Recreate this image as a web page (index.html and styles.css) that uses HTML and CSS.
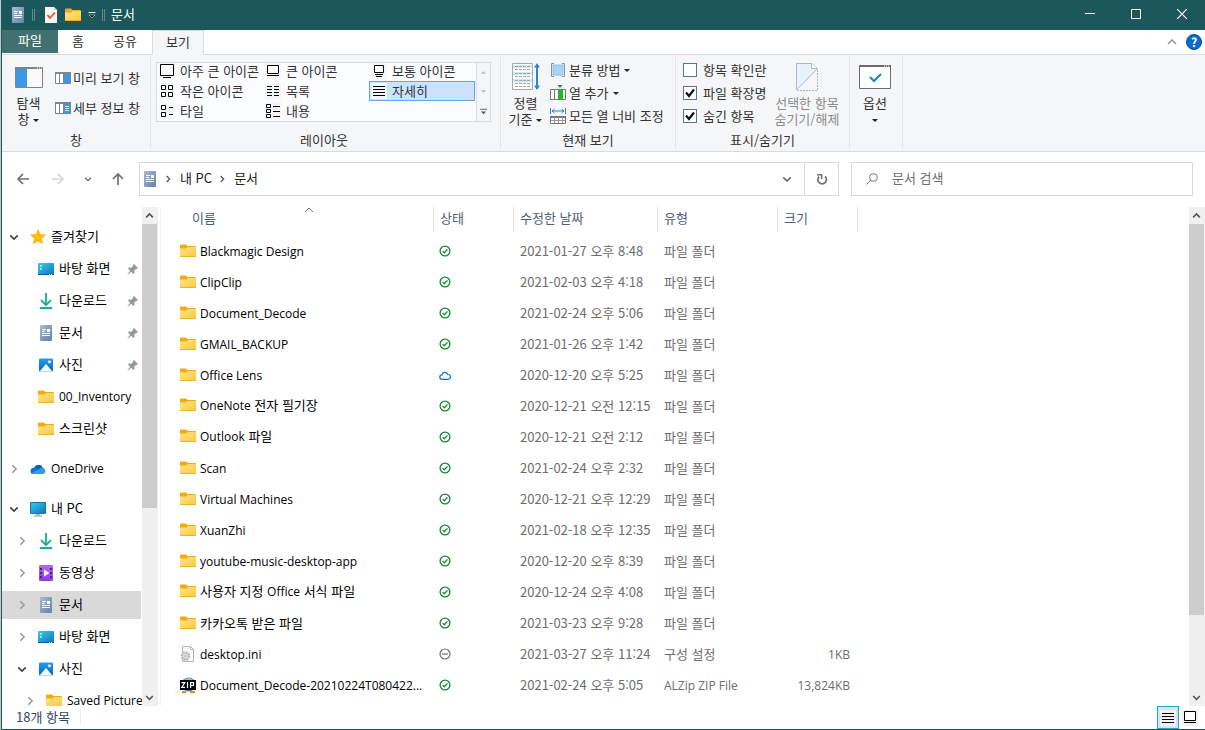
FILE: index.html
```html
<!DOCTYPE html>
<html lang="ko">

<head>
  <meta charset="UTF-8">
  <meta name="viewport" content="width=device-width, initial-scale=1.0">
  <title>문서</title>
  <link rel="stylesheet" href="styles.css">
</head>

<body>
  <!-- icon set -->
  <svg class="sprite" aria-hidden="true">
    <defs>
      <linearGradient id="g-folder" x1="0" y1="0" x2="1" y2="1"><stop offset="0" stop-color="#ffe391"/><stop offset="1" stop-color="#fdc937"/></linearGradient>
      <linearGradient id="g-doc" x1="0" y1="0" x2="1" y2="1"><stop offset="0" stop-color="#a6bcd3"/><stop offset="1" stop-color="#5f82a9"/></linearGradient>
      <linearGradient id="g-desk" x1="0" y1="0" x2="1" y2="1"><stop offset="0" stop-color="#2fd0e6"/><stop offset="1" stop-color="#1272c4"/></linearGradient>
      <linearGradient id="g-down" x1="0" y1="0" x2="0" y2="1"><stop offset="0" stop-color="#35b983"/><stop offset="1" stop-color="#10b09c"/></linearGradient>
      <linearGradient id="g-video" x1="0" y1="0" x2="0" y2="1"><stop offset="0" stop-color="#b36bf0"/><stop offset="1" stop-color="#8a3fe0"/></linearGradient>
      <linearGradient id="g-photo" x1="0" y1="0" x2="0" y2="1"><stop offset="0" stop-color="#1fa0ee"/><stop offset="1" stop-color="#0a62b5"/></linearGradient>
    </defs>
    <symbol id="folder" viewBox="0 0 16 16">
      <path d="M0 2.500q0-1 1-1h5l1.500 1.500H15q1 0 1 1V7H0z" fill="#f2ab09"/>
      <path d="M0 5.500h6.500l1.200-1.500H16v9q0 1-1 1H1q-1 0-1-1z" fill="url(#g-folder)"/>
      <path d="M0 13.500h16" stroke="#eab12c"/>
    </symbol>
    <symbol id="doc" viewBox="0 0 16 16">
      <rect x="2" y="0" width="12" height="16" rx="1" fill="url(#g-doc)"/>
      <path d="M4 4.500h4M4 6.500h3M4 8.500h8M4 10.500h8" stroke="#fff"/>
      <rect x="9" y="4" width="3" height="3" fill="#fff"/>
    </symbol>
    <symbol id="desk" viewBox="0 0 16 16">
      <rect x="0" y="2" width="16" height="12" rx="1" fill="url(#g-desk)"/>
      <path d="M2 4h1.500v1.500H2zM2 7h1.500v1.500H2z" fill="#fff"/>
      <path d="M0 13.500h16" stroke="#0d5e9e"/><path d="M11 13.500h1m1 0h1" stroke="#d6ecfa"/>
    </symbol>
    <symbol id="down" viewBox="0 0 16 16">
      <path d="M3 7l5 5 5-5" fill="none" stroke="url(#g-down)" stroke-width="2"/>
      <path d="M2 15h12" stroke="#12ae95" stroke-width="2"/>
      <path d="M7 0h2v11H7z" fill="#2bb58a"/>
    </symbol>
    <symbol id="photo" viewBox="0 0 16 16">
      <rect x="1" y="1.500" width="14" height="13" rx="1" fill="url(#g-photo)"/>
      <path d="M1.500 14.500L8 7l6.500 7.500z" fill="#f3f9fe"/>
      <circle cx="11.500" cy="4.800" r="1.500" fill="#eaf6ff"/>
    </symbol>
    <symbol id="video" viewBox="0 0 16 16">
      <rect x="1" y="0" width="14" height="16" rx="1" fill="url(#g-video)"/>
      <path d="M2 3h2v2H2zM2 7h2v2H2zM2 11h2v2H2zM12 3h2v2h-2zM12 7h2v2h-2zM12 11h2v2h-2z" fill="#4a1f86"/>
      <path d="M6 4.500l5.500 3.500L6 11.500z" fill="#fff"/>
    </symbol>
    <symbol id="star" viewBox="0 0 16 16">
      <path d="M8 .8l2.100 4.700 5.100.5-3.900 3.400 1.200 5.100L8 11.900l-4.500 2.600 1.200-5.100L.8 6l5.100-.5z" fill="#ffc20a" stroke="#f5a90c" stroke-width=".8"/>
    </symbol>
    <symbol id="onedrive" viewBox="0 0 16 16">
      <path d="M4 7.500a4.700 4.700 0 0 1 8.800-1L9 10z" fill="#0a5fb4"/>
      <path d="M3 13a3.200 3.200 0 0 1 1-6.300q1.800-.5 3.500.8l4 4.500z" fill="#1173cc"/>
      <path d="M1 12.400L9 8a4 4 0 0 1 3.300-1.600A3.400 3.400 0 0 1 13 13H3z" fill="#2a9ce8"/>
    </symbol>
    <symbol id="pc" viewBox="0 0 16 16">
      <rect x="0" y="1" width="16" height="12" rx="1" fill="#1a75ae"/>
      <rect x="1" y="2" width="14" height="10" fill="url(#g-desk)"/>
      <path d="M6 13h4v1.500H6z" fill="#b5bcc2"/><path d="M4 15h8" stroke="#8d979e"/>
    </symbol>
    <symbol id="pin" viewBox="0 0 12 12">
      <path d="M7 1l4 4-1 1-.8-.3-2 2 .3 2.300-1 1L4.200 8.700 1 11.500.5 11l2.800-3.200L1 5.500l1-1 2.300.3 2-2L6 2z" fill="#8f99a3"/>
    </symbol>
    <symbol id="ini" viewBox="0 0 16 16">
      <path d="M2.500.5h8l3 3v12h-11z" fill="#fafafa" stroke="#b5b5b5"/><path d="M10.500.5v3h3" fill="none" stroke="#b5b5b5"/>
      <circle cx="5.500" cy="10" r="4" fill="#eee" stroke="#b3b3b3" stroke-width="1.600" stroke-dasharray="2 1.100"/>
      <circle cx="5.500" cy="10" r="3" fill="#e6e6e6" stroke="#bbb"/><circle cx="5.500" cy="10" r="1" fill="#fff" stroke="#b5b5b5"/>
    </symbol>
    <symbol id="zip" viewBox="0 0 16 16">
      <circle cx="8.500" cy="7.500" r="7" fill="#3c82b5"/><path d="M4 3q4.500-4 9 0z" fill="#8ec3e4"/>
      <path d="M2 14h4v2H2zM10 14h5v2h-5z" fill="#d98a29"/>
      <rect x="0" y="3" width="16" height="10" fill="#000"/>
      <path d="M1.500 5.600h3.300L1.800 10.400h3.200M7.500 5v6M10.600 11V5.600h2.900v2.900h-2.900" fill="none" stroke="#fff" stroke-width="1.200"/>
    </symbol>
    <symbol id="ok" viewBox="0 0 12 12">
      <circle cx="6" cy="6" r="4.900" fill="none" stroke="#17892f" stroke-width="1.300"/><path d="M3.600 6.100l1.700 1.700 3.200-3.400" fill="none" stroke="#17892f" stroke-width="1.300"/>
    </symbol>
    <symbol id="minus" viewBox="0 0 12 12">
      <circle cx="6" cy="6" r="5" fill="none" stroke="#707070" stroke-width="1.200"/><path d="M3 6h6" stroke="#707070" stroke-width="1.200"/>
    </symbol>
    <symbol id="cloud" viewBox="0 0 12 12">
      <path d="M3 10.300a2.200 2.200 0 0 1 0-4.400 3 3 0 0 1 5.800-.4 2.400 2.400 0 0 1 .4 4.800z" fill="none" stroke="#0b74d1" stroke-width="1.200"/>
    </symbol>
    <symbol id="chev-r" viewBox="0 0 12 12"><path d="M4 1.500L8.500 6 4 10.500" fill="none" stroke="currentColor" stroke-width="1.900"/></symbol>
    <symbol id="chev-d" viewBox="0 0 12 12"><path d="M1.500 4L6 8.500 10.500 4" fill="none" stroke="currentColor" stroke-width="2"/></symbol>
    <symbol id="chev-u" viewBox="0 0 12 12"><path d="M1.500 8.500L6 4l4.500 4.500" fill="none" stroke="currentColor" stroke-width="2.200"/></symbol>
    <symbol id="details" viewBox="0 0 16 16"><path d="M2 3.500h12M2 6.500h12M2 9.500h12M2 12.500h12" stroke="#000"/></symbol>
  </svg>

  <div class="window">
    <header class="titlebar">
      <svg class="icon"><use href="#doc"/></svg>
      <span class="titlebar__sep"></span>
      <svg class="icon icon--check" viewBox="0 0 16 16">
        <path d="M2 0h9l3 3v13H2z" fill="#f7f5f4"/><path d="M11 0v3h3z" fill="#c9c4c0"/><path d="M4.500 8l2.500 3 5-5.500" fill="none" stroke="#e2531c" stroke-width="1.800"/>
      </svg>
      <svg class="icon"><use href="#folder"/></svg>
      <svg class="icon icon--quick" viewBox="0 0 8 8"><path d="M.5 1.500h7" stroke="#fff"/><path d="M1 4h6L4 7z" fill="#000" stroke="#fff" stroke-width=".5"/></svg>
      <span class="titlebar__sep"></span>
      <h1>문서</h1>
      <div class="titlebar__controls">
        <button aria-label="최소화"><svg viewBox="0 0 10 10"><path d="M0 4.500h10" stroke="#fff"/></svg></button>
        <button aria-label="최대화"><svg viewBox="0 0 10 10"><path d="M.5.5h9v9h-9z" fill="none" stroke="#fff"/></svg></button>
        <button aria-label="닫기"><svg viewBox="0 0 10 10"><path d="M0 0l10 10M10 0L0 10" stroke="#fff" stroke-width="1.200"/></svg></button>
      </div>
    </header>

    <nav class="tabs">
      <button class="tabs__file">파일</button>
      <button class="tabs__home">홈</button>
      <button class="tabs__share">공유</button>
      <button class="tabs__active">보기</button>
      <div class="tabs__right">
        <button class="tabs__fold" aria-label="리본 최소화"><svg viewBox="0 0 10 10"><path d="M1 7l4-4 4 4" fill="none" stroke="#8a8a8a" stroke-width="1.300"/></svg></button>
        <button class="help">?</button>
      </div>
    </nav>

    <div class="ribbon">
      <section class="group group--panes">
        <div class="group__body">
          <button class="big">
            <svg class="big__pane" viewBox="0 0 28 21"><path d="M.5.500h27v20H.5z" fill="#fafafa" stroke="#7d8388"/><path d="M0 1h28" stroke="#7d8388" stroke-width="2"/><path d="M22 1h1m1 0h1m1 0h1" stroke="#fff"/><path d="M1 2h11v18H1z" fill="#3b97e3"/></svg>
            <span>탐색<br>창<i class="arrow"></i></span>
          </button>
          <div class="stack stack--panes">
            <button class="small"><svg viewBox="0 0 16 12"><path d="M.5.500h15v11H.5zM4.500 2v9M8.500 2v9" fill="#fff" stroke="#7d8388"/><path d="M0 1h16" stroke="#7d8388" stroke-width="2"/><path d="M9 2h6v9H9z" fill="#3b97e3"/></svg>미리 보기 창</button>
            <button class="small"><svg viewBox="0 0 16 12"><path d="M.5.500h15v11H.5zM4.500 2v9M8.500 2v9" fill="#fff" stroke="#7d8388"/><path d="M0 1h16" stroke="#7d8388" stroke-width="2"/><path d="M9 2h6v9H9z" fill="#3b97e3"/><path d="M10 4.500h4M10 6.500h4M10 8.500h4" stroke="#cfe6fa"/></svg>세부 정보 창</button>
          </div>
        </div>
        <h2>창</h2>
      </section>

      <section class="group group--layout">
        <div class="gallery">
          <div class="gallery__items">
            <button><svg viewBox="0 0 16 16"><path d="M1.500 1.500h13v11h-13z" fill="#fff" stroke="#000"/><path d="M4 14.500h8" stroke="#000"/></svg>아주 큰 아이콘</button>
            <button><svg viewBox="0 0 16 16"><path d="M2.500 2.500h11v8h-11z" fill="#fff" stroke="#000"/><path d="M2 12.500h12" stroke="#000"/></svg>큰 아이콘</button>
            <button><svg viewBox="0 0 16 16"><path d="M3.500 2.500h9v7h-9z" fill="#fff" stroke="#000"/><path d="M4 11.500h8M5 13.500h6" stroke="#000"/></svg>보통 아이콘</button>
            <button><svg viewBox="0 0 16 16"><path d="M2.500 2.500h4v4h-4zM9.500 2.500h4v4h-4zM2.500 9.500h4v4h-4zM9.500 9.500h4v4h-4z" fill="#fff" stroke="#000"/></svg>작은 아이콘</button>
            <button><svg viewBox="0 0 16 16"><path d="M2 3.500h5M9 3.500h5M2 6.500h5M9 6.500h5M2 9.500h5M9 9.500h5M2 12.500h5M9 12.500h5" stroke="#000"/></svg>목록</button>
            <button class="is-selected"><svg><use href="#details"/></svg>자세히</button>
            <button><svg viewBox="0 0 16 16"><path d="M2.500 2.500h4v4h-4zM2.500 9.500h4v4h-4z" fill="#fff" stroke="#000"/><path d="M10 4.500h4M10 11.500h4" stroke="#000"/></svg>타일</button>
            <button><svg viewBox="0 0 16 16"><path d="M1.500 1.500h4v3h-4zM1.500 6.500h4v3h-4zM1.500 11.500h4v3h-4z" fill="#fff" stroke="#000"/><path d="M8 3.500h7M8 8.500h7M8 13.500h7" stroke="#000"/></svg>내용</button>
          </div>
          <div class="gallery__scroll">
            <button aria-label="위로"><svg viewBox="0 0 8 8"><path d="M1 5.500h6l-3-3z" fill="#b4b8bf"/></svg></button>
            <button aria-label="아래로"><svg viewBox="0 0 8 8"><path d="M1 2.500h6l-3 3z" fill="#b4b8bf"/></svg></button>
            <button aria-label="자세히"><svg viewBox="0 0 8 8"><path d="M0 1.500h8" stroke="#4a5a73"/><path d="M1 4h6L4 7z" fill="#4a5a73"/></svg></button>
          </div>
        </div>
        <h2>레이아웃</h2>
      </section>

      <section class="group group--view">
        <div class="group__body">
          <button class="big">
            <svg class="big__sort" viewBox="0 0 28 28"><path d="M.5.500h20v26H.5z" fill="#fff" stroke="#a3a8ac"/><path d="M1 3.500h19M1 10.500h19M1 17.500h19" stroke="#cfe8f4" stroke-width="3"/><path d="M3 3.500h15M3 6.500h15M3 10.500h15M3 13.500h15M3 17.500h15M3 20.500h15M3 23.500h15" stroke="#a0a5a8" stroke-dasharray="3 1"/><path d="M25 2v24" stroke="#2b86d0" stroke-width="2"/><path d="M22 4.500L25 0l3 4.500zM22 22.500l3 4.500 3-4.500z" fill="#2b86d0"/></svg>
            <span>정렬<br>기준<i class="arrow"></i></span>
          </button>
          <div class="stack">
            <button class="small"><svg viewBox="0 0 16 16"><path d="M4 1.500H1.500v13H4M12 1.500h2.500v13H12" fill="none" stroke="#8b9094"/><rect x="3" y="3" width="10" height="10" fill="#a9d5f5" stroke="#8cc4ec"/></svg>분류 방법<i class="arrow"></i></button>
            <button class="small"><svg viewBox="0 0 16 16"><path d="M.5 4.500h15v10H.5zM4.500 5v9" fill="#fff" stroke="#777"/><path d="M8 4h5v11H8z" fill="#26b52c"/><path d="M7.500 0h5L10 3z" fill="#1e78c2"/></svg>열 추가<i class="arrow"></i></button>
            <button class="small"><svg viewBox="0 0 16 16"><path d="M.5 0v6M15.500 0v6M2 3h12M4.500 1L2 3l2.500 2M11.500 1L14 3l-2.500 2" fill="none" stroke="#2b7fc9"/><path d="M.5 8.500h15v7H.5z" fill="#fff" stroke="#777"/><path d="M0 9h16" stroke="#777" stroke-width="2"/><path d="M4.500 9v6M8.500 9v6M12.500 9v6M1 12.500h14" stroke="#999"/></svg>모든 열 너비 조정</button>
          </div>
        </div>
        <h2>현재 보기</h2>
      </section>

      <section class="group group--show">
        <div class="group__body">
          <div class="stack stack--checks">
            <label><input type="checkbox">항목 확인란</label>
            <label><input type="checkbox" checked>파일 확장명</label>
            <label><input type="checkbox" checked>숨긴 항목</label>
          </div>
          <button class="big" disabled>
            <svg class="big__hide" viewBox="0 0 22 28"><path d="M.5 27V.500h15l6 5z" fill="#e9f1fb" stroke="#a9b8cf"/><path d="M15.500.500v5h6" fill="#fff" stroke="#a9b8cf"/><path d="M21.500 7v20.500H1" fill="none" stroke="#a9b8cf" stroke-dasharray="2 1"/></svg>
            <span>선택한 항목<br>숨기기/해제</span>
          </button>
        </div>
        <h2>표시/숨기기</h2>
      </section>

      <section class="group group--options">
        <div class="group__body">
          <button class="big">
            <svg class="big__options" viewBox="0 0 32 24"><path d="M.5.500h31v23H.5z" fill="#fff" stroke="#6b6b6b"/><path d="M0 1h32" stroke="#6b6b6b" stroke-width="2"/><path d="M25 1h1m1 0h1m1 0h1" stroke="#fff"/><path d="M11 12l4 4 7-7" fill="none" stroke="#1a86dd" stroke-width="2.200"/></svg>
            <span>옵션<br><i class="arrow"></i></span>
          </button>
        </div>
      </section>
    </div>

    <div class="navbar">
      <div class="navbar__buttons">
        <button aria-label="뒤로"><svg viewBox="0 0 14 14"><path d="M13 7H2M7 2L2 7l5 5" fill="none" stroke="#707070" stroke-width="1.700"/></svg></button>
        <button aria-label="앞으로"><svg viewBox="0 0 14 14"><path d="M1 7h11M7 2l5 5-5 5" fill="none" stroke="#d6d6d6" stroke-width="1.700"/></svg></button>
        <button class="recent" aria-label="최근 위치"><svg><use href="#chev-d"/></svg></button>
        <button class="up" aria-label="위로"><svg viewBox="0 0 14 14"><path d="M7 13V2M2 7l5-5 5 5" fill="none" stroke="#707070" stroke-width="1.700"/></svg></button>
      </div>
      <div class="address">
        <svg class="icon"><use href="#doc"/></svg>
        <svg class="crumb"><use href="#chev-r"/></svg>
        <a href="#">내 PC</a>
        <svg class="crumb"><use href="#chev-r"/></svg>
        <a href="#">문서</a>
        <button class="address__drop" aria-label="이전 위치"><svg><use href="#chev-d"/></svg></button>
        <button class="address__refresh" aria-label="새로 고침"><svg viewBox="0 0 12 12"><path d="M9 3.300A4.300 4.300 0 1 1 3 3.600" fill="none" stroke="#707070" stroke-width="1.700"/><path d="M1 1.800h4.600v4.400" fill="none" stroke="#707070" stroke-width="1.500"/></svg></button>
      </div>
      <label class="search">
        <svg viewBox="0 0 12 12"><circle cx="7.500" cy="4.500" r="3.900" fill="none" stroke="#777"/><path d="M4.700 7.300L.5 11.500" stroke="#777"/></svg>
        <input type="text" placeholder="문서 검색" aria-label="문서 검색">
      </label>
    </div>

    <div class="content">
      <aside class="sidebar">
        <ul class="tree">
          <li class="l0 is-open"><svg class="chev"><use href="#chev-d"/></svg><svg class="icon"><use href="#star"/></svg><span>즐겨찾기</span></li>
          <li class="l1"><svg class="icon"><use href="#desk"/></svg><span>바탕 화면</span><svg class="pin"><use href="#pin"/></svg></li>
          <li class="l1"><svg class="icon"><use href="#down"/></svg><span>다운로드</span><svg class="pin"><use href="#pin"/></svg></li>
          <li class="l1"><svg class="icon"><use href="#doc"/></svg><span>문서</span><svg class="pin"><use href="#pin"/></svg></li>
          <li class="l1"><svg class="icon"><use href="#photo"/></svg><span>사진</span><svg class="pin"><use href="#pin"/></svg></li>
          <li class="l1"><svg class="icon"><use href="#folder"/></svg><b class="latin">00_Inventory</b></li>
          <li class="l1"><svg class="icon"><use href="#folder"/></svg><span>스크린샷</span></li>
        </ul>
        <ul class="tree">
          <li class="l0"><svg class="chev"><use href="#chev-r"/></svg><svg class="icon"><use href="#onedrive"/></svg><b class="latin">OneDrive</b></li>
        </ul>
        <ul class="tree">
          <li class="l0 is-open"><svg class="chev"><use href="#chev-d"/></svg><svg class="icon"><use href="#pc"/></svg><span>내 PC</span></li>
          <li class="l1"><svg class="chev"><use href="#chev-r"/></svg><svg class="icon"><use href="#down"/></svg><span>다운로드</span></li>
          <li class="l1"><svg class="chev"><use href="#chev-r"/></svg><svg class="icon"><use href="#video"/></svg><span>동영상</span></li>
          <li class="l1 is-current"><svg class="chev"><use href="#chev-r"/></svg><svg class="icon"><use href="#doc"/></svg><span>문서</span></li>
          <li class="l1"><svg class="chev"><use href="#chev-r"/></svg><svg class="icon"><use href="#desk"/></svg><span>바탕 화면</span></li>
          <li class="l1 is-open"><svg class="chev"><use href="#chev-d"/></svg><svg class="icon"><use href="#photo"/></svg><span>사진</span></li>
          <li class="l2"><svg class="chev"><use href="#chev-r"/></svg><svg class="icon"><use href="#folder"/></svg><b class="latin">Saved Pictures</b></li>
        </ul>
      </aside>
      <div class="scrollbar">
        <button aria-label="위로 스크롤"><svg><use href="#chev-u"/></svg></button>
        <div class="scrollbar__track"><div class="scrollbar__thumb scrollbar__thumb--side"></div></div>
        <button aria-label="아래로 스크롤"><svg><use href="#chev-d"/></svg></button>
      </div>

      <main class="files">
        <table>
          <colgroup><col class="c-name"><col class="c-state"><col class="c-date"><col class="c-type"><col class="c-size"></colgroup>
          <thead>
            <tr>
              <th><div>이름<svg class="sort" viewBox="0 0 10 6"><path d="M1 5l4-4 4 4" fill="none" stroke="#777"/></svg></div></th>
              <th><div>상태</div></th>
              <th><div>수정한 날짜</div></th>
              <th><div>유형</div></th>
              <th><div>크기</div></th>
            </tr>
          </thead>
          <tbody>
            <tr><td class="latin"><svg class="icon"><use href="#folder"/></svg>Blackmagic Design</td><td><svg class="state"><use href="#ok"/></svg></td><td>2021-01-27 오후 8:48</td><td>파일 폴더</td><td></td></tr>
            <tr><td class="latin"><svg class="icon"><use href="#folder"/></svg>ClipClip</td><td><svg class="state"><use href="#ok"/></svg></td><td>2021-02-03 오후 4:18</td><td>파일 폴더</td><td></td></tr>
            <tr><td class="latin"><svg class="icon"><use href="#folder"/></svg>Document_Decode</td><td><svg class="state"><use href="#ok"/></svg></td><td>2021-02-24 오후 5:06</td><td>파일 폴더</td><td></td></tr>
            <tr><td class="latin"><svg class="icon"><use href="#folder"/></svg>GMAIL_BACKUP</td><td><svg class="state"><use href="#ok"/></svg></td><td>2021-01-26 오후 1:42</td><td>파일 폴더</td><td></td></tr>
            <tr><td class="latin"><svg class="icon"><use href="#folder"/></svg>Office Lens</td><td><svg class="state"><use href="#cloud"/></svg></td><td>2020-12-20 오후 5:25</td><td>파일 폴더</td><td></td></tr>
            <tr><td><svg class="icon"><use href="#folder"/></svg><b class="latin">OneNote</b> 전자 필기장</td><td><svg class="state"><use href="#ok"/></svg></td><td>2020-12-21 오전 12:15</td><td>파일 폴더</td><td></td></tr>
            <tr><td><svg class="icon"><use href="#folder"/></svg><b class="latin">Outlook</b> 파일</td><td><svg class="state"><use href="#ok"/></svg></td><td>2020-12-21 오전 2:12</td><td>파일 폴더</td><td></td></tr>
            <tr><td class="latin"><svg class="icon"><use href="#folder"/></svg>Scan</td><td><svg class="state"><use href="#ok"/></svg></td><td>2021-02-24 오후 2:32</td><td>파일 폴더</td><td></td></tr>
            <tr><td class="latin"><svg class="icon"><use href="#folder"/></svg>Virtual Machines</td><td><svg class="state"><use href="#ok"/></svg></td><td>2020-12-21 오후 12:29</td><td>파일 폴더</td><td></td></tr>
            <tr><td class="latin"><svg class="icon"><use href="#folder"/></svg>XuanZhi</td><td><svg class="state"><use href="#ok"/></svg></td><td>2021-02-18 오후 12:35</td><td>파일 폴더</td><td></td></tr>
            <tr><td class="latin"><svg class="icon"><use href="#folder"/></svg>youtube-music-desktop-app</td><td><svg class="state"><use href="#ok"/></svg></td><td>2020-12-20 오후 8:39</td><td>파일 폴더</td><td></td></tr>
            <tr><td><svg class="icon"><use href="#folder"/></svg>사용자 지정 <b class="latin">Office</b> 서식 파일</td><td><svg class="state"><use href="#ok"/></svg></td><td>2020-12-24 오후 4:08</td><td>파일 폴더</td><td></td></tr>
            <tr><td><svg class="icon"><use href="#folder"/></svg>카카오톡 받은 파일</td><td><svg class="state"><use href="#ok"/></svg></td><td>2021-03-23 오후 9:28</td><td>파일 폴더</td><td></td></tr>
            <tr><td class="latin"><svg class="icon"><use href="#ini"/></svg>desktop.ini</td><td><svg class="state"><use href="#minus"/></svg></td><td>2021-03-27 오후 11:24</td><td>구성 설정</td><td class="latin">1KB</td></tr>
            <tr><td class="latin"><svg class="icon"><use href="#zip"/></svg>Document_Decode-20210224T080422...</td><td><svg class="state"><use href="#ok"/></svg></td><td>2021-02-24 오후 5:05</td><td class="latin">ALZip ZIP File</td><td class="latin">13,824KB</td></tr>
          </tbody>
        </table>
      </main>
      <div class="scrollbar">
        <button aria-label="위로 스크롤"><svg><use href="#chev-u"/></svg></button>
        <div class="scrollbar__track"><div class="scrollbar__thumb scrollbar__thumb--main"></div></div>
        <button aria-label="아래로 스크롤"><svg><use href="#chev-d"/></svg></button>
      </div>
    </div>

    <footer class="statusbar">
      <span>18개 항목</span>
      <div class="statusbar__views">
        <button class="is-on" aria-label="자세히"><svg><use href="#details"/></svg></button>
        <button aria-label="큰 아이콘"><svg viewBox="0 0 16 16"><path d="M2.500 1.500h11v9h-11z" fill="#fff" stroke="#000"/><path d="M2 12.500h12" stroke="#000"/></svg></button>
      </div>
    </footer>
  </div>
</body>

</html>
```
FILE: styles.css
```css
* {
  padding: 0;
  margin: 0;
  border: 0;
  box-sizing: border-box;
}

body {
  font-family: 'Noto Sans CJK KR', sans-serif;
  font-size: 13px;
  line-height: 16px;
  color: #000;
  background: #fff;
  border-left: 1px solid #c4c8c8;
}

button,
input {
  font: inherit;
  color: inherit;
  background: none;
}

h1,
h2,
th,
b {
  font-size: inherit;
  font-weight: 400;
}

ul {
  list-style: none;
}

a {
  color: inherit;
  text-decoration: none;
}

svg {
  display: block;
  flex: none;
}

.sprite {
  position: absolute;
  width: 0;
  height: 0;
}

.icon {
  width: 16px;
  height: 16px;
}

.latin {
  font-family: 'Open Sans', sans-serif;
  font-size: 12px;
}

.window {
  display: flex;
  flex-direction: column;
  height: 100vh;
  border-left: 1px solid #1c585b;
  border-bottom: 1px solid #1c585b;
  overflow: hidden;
}

/* title bar */
.titlebar {
  display: flex;
  align-items: center;
  flex: none;
  height: 30px;
  padding-left: 8px;
  color: #fff;
  background: #1c585b;
}

.titlebar h1 {
  padding-bottom: 2px;
}

.titlebar__sep {
  width: 3px;
  height: 12px;
  margin: 0 6px;
  border: solid #65898b;
  border-width: 0 1px;
}

.icon--check {
  margin-right: 6px;
  margin-left: 2px;
}

.icon--quick {
  width: 8px;
  height: 8px;
  margin-left: 7px;
}

.titlebar__controls {
  display: flex;
  align-self: stretch;
  margin-left: auto;
}

.titlebar__controls button {
  display: flex;
  justify-content: center;
  align-items: center;
  width: 46px;
  padding-bottom: 2px;
}

.titlebar__controls svg {
  width: 10px;
  height: 10px;
}

/* tabs */
.tabs {
  display: flex;
  flex: none;
  height: 25px;
  color: #333;
  border-bottom: 1px solid #dadbdc;
}

.tabs button {
  height: 24px;
  padding-bottom: 3px;
}

.tabs .tabs__file {
  width: 56px;
  height: 23px;
  color: #fff;
  background: #40706f;
}

.tabs__home {
  width: 40px;
}

.tabs__share {
  width: 54px;
}

.tabs .tabs__active {
  width: 52px;
  height: 25px;
  background: #f5f6f7;
  border: solid #dadbdc;
  border-width: 1px 1px 0;
}

.tabs__right {
  display: flex;
  align-items: center;
  gap: 9px;
  margin-left: auto;
  padding-right: 3px;
}

.tabs__fold svg {
  width: 10px;
  height: 10px;
}

.tabs .tabs__fold {
  padding-bottom: 0;
}

.tabs .help {
  width: 16px;
  height: 16px;
  padding: 0;
  font-size: 12px;
  font-weight: 700;
  line-height: 14px;
  color: #fff;
  background: #0a6cd0;
  border: 1px solid #08478c;
  border-radius: 50%;
}

/* ribbon */
.ribbon {
  display: flex;
  flex: none;
  padding: 2px 0 3px;
  color: #333;
  background: #f5f6f7;
  border-bottom: 1px solid #dadbdc;
}

.group {
  display: flex;
  flex-direction: column;
  padding-top: 5px;
  border-right: 1px solid #e2e3e4;
  white-space: nowrap;
}

.group__body {
  display: flex;
  height: 70px;
}

.group h2 {
  text-align: center;
}

.group--panes {
  width: 149px;
}

.group--layout {
  width: 350px;
  padding-right: 8px;
  padding-left: 5px;
}

.group--view {
  width: 175px;
}

.group--show {
  width: 174px;
}

.group--options {
  width: 53px;
}

.big {
  display: flex;
  flex-direction: column;
  justify-content: flex-end;
  align-items: center;
  gap: 4px;
  padding-bottom: 5px;
}

.big:disabled {
  color: #8d8d8d;
}

.group--panes .big {
  width: 53px;
}

.group--view .big {
  width: 49px;
}

.group--show .big {
  margin-left: 8px;
}

.group--options .big {
  width: 50px;
}

.big__pane {
  width: 28px;
  height: 21px;
  margin-bottom: 3px;
}

.big__sort {
  width: 28px;
  height: 28px;
}

.big__hide {
  width: 22px;
  height: 28px;
}

.big__options {
  width: 32px;
  height: 24px;
  margin-bottom: 2px;
}

.arrow {
  display: inline-block;
  margin-left: 4px;
  border: 3px solid transparent;
  border-top-color: #222;
  border-bottom: 0;
  vertical-align: middle;
}

.group--options .arrow {
  margin-left: 0;
}

.stack {
  display: flex;
  flex-direction: column;
  gap: 7px;
}

.stack--panes {
  gap: 14px;
  padding-top: 8px;
}

.group--panes .small svg {
  margin-right: 2px;
}

.stack--checks {
  padding-left: 7px;
}

.stack label,
.small {
  display: flex;
  align-items: center;
  height: 16px;
}

.small svg {
  width: 16px;
  height: 16px;
  margin-right: 3px;
}

.stack label input {
  appearance: none;
  width: 14px;
  height: 14px;
  margin-right: 6px;
  background: #fff;
  border: 1px solid #5b7399;
}

.stack label input:checked {
  background: #fff url("data:image/svg+xml,%3Csvg xmlns='http://www.w3.org/2000/svg' viewBox='0 0 12 12'%3E%3Cpath d='M2 5.500l3 3.500 5-6.500' fill='none' stroke='%23111' stroke-width='2.200'/%3E%3C/svg%3E");
}

.gallery {
  display: flex;
  width: 335px;
  height: 60px;
  margin-bottom: 10px;
  background: #fbfcfe;
  border: 1px solid #dadbdc;
}

.gallery__items {
  display: grid;
  grid-template-columns: repeat(3, 106px);
  grid-template-rows: repeat(3, 20px);
  flex: 1;
  align-content: end;
}

.gallery__items button {
  display: flex;
  align-items: center;
  padding-left: 1px;
  border: 1px solid transparent;
}

.gallery__items svg {
  width: 16px;
  height: 16px;
  margin-right: 5px;
  background: #f5f6f6;
}

.gallery__items .is-selected {
  background: #cde3fc;
  border-color: #66a3e2;
}

.gallery__scroll {
  display: flex;
  flex-direction: column;
  width: 14px;
  background: #f5f6f7;
  border-left: 1px solid #dadbdc;
}

.gallery__scroll button {
  display: flex;
  justify-content: center;
  align-items: center;
  flex: 1;
}

.gallery__scroll svg {
  width: 7px;
  height: 7px;
}

/* address row */
.navbar {
  display: flex;
  flex: none;
  gap: 12px;
  padding: 10px 12px 11px 3px;
  color: #222;
}

.navbar__buttons {
  display: flex;
  margin-right: -8px;
}

.navbar__buttons button {
  display: flex;
  justify-content: center;
  align-items: center;
  width: 35px;
}

.navbar__buttons svg {
  width: 14px;
  height: 14px;
}

.navbar__buttons .recent {
  width: 26px;
  color: #707070;
}

.navbar__buttons .recent svg {
  width: 8px;
  height: 8px;
}

.navbar__buttons .up {
  width: 34px;
}

.address {
  display: flex;
  align-items: center;
  flex: 1;
  height: 34px;
  padding-left: 2px;
  border: 1px solid #d9d9d9;
}

.address a {
  padding-bottom: 2px;
}

.crumb {
  width: 8px;
  height: 8px;
  margin: 0 8px 0 6px;
  color: #555;
}

.address__drop,
.address__refresh {
  display: flex;
  justify-content: center;
  align-items: center;
  width: 34px;
  height: 32px;
  color: #707070;
}

.address__drop {
  margin-left: auto;
}

.address__refresh {
  border-left: 1px solid #d9d9d9;
}

.address__drop svg {
  width: 10px;
  height: 10px;
}

.address__refresh svg {
  width: 12px;
  height: 12px;
}

.search {
  display: flex;
  align-items: center;
  gap: 14px;
  width: 342px;
  height: 34px;
  padding: 0 14px;
  border: 1px solid #d9d9d9;
}

.search svg {
  width: 12px;
  height: 12px;
}

.search input {
  flex: 1;
  min-width: 0;
  padding-bottom: 2px;
  outline: none;
}

.search input::placeholder {
  color: #6d6d6d;
}

/* folder tree */
.content {
  display: flex;
  flex: 1;
  min-height: 0;
}

.sidebar {
  flex: none;
  width: 140px;
  padding-top: 16px;
  overflow: hidden;
}

.tree {
  display: flex;
  flex-direction: column;
  gap: 4px;
  margin-bottom: 12px;
}

.tree li {
  display: flex;
  align-items: center;
  height: 28px;
  margin-right: 1px;
  white-space: nowrap;
}

.tree span {
  padding-bottom: 2px;
}

.tree .l0 {
  padding-left: 28px;
}

.tree .l1 {
  padding-left: 36px;
}

.tree .l2 {
  padding-left: 44px;
}

.tree .icon {
  margin-right: 5px;
}

.tree .chev {
  width: 10px;
  height: 10px;
  margin-right: 11px;
  margin-left: -21px;
  color: #9b9b9b;
}

.tree .is-open .chev {
  color: #404040;
}

.tree .is-current {
  background: #d9d9d9;
}

.tree .pin {
  width: 12px;
  height: 12px;
  margin-right: 2px;
  margin-left: auto;
}

/* scroll bars */
.scrollbar {
  display: flex;
  flex-direction: column;
  flex: none;
  width: 16px;
  background: #f0f0f0;
}

.scrollbar button {
  display: flex;
  justify-content: center;
  align-items: center;
  height: 17px;
  padding-right: 1px;
  color: #555;
}

.scrollbar svg {
  width: 9px;
  height: 9px;
}

.scrollbar__track {
  flex: 1;
}

.scrollbar__thumb {
  margin-right: 1px;
  background: #cdcdcd;
}

.scrollbar__thumb--side {
  height: 61%;
}

.scrollbar__thumb--main {
  height: 84%;
}

/* file list */
.files {
  flex: 1;
  min-width: 0;
  margin-left: 2px;
  border-left: 1px solid #f5f5f5;
  overflow: hidden;
}

table {
  table-layout: fixed;
  width: 697px;
  border-collapse: collapse;
}

.c-name {
  width: 273px;
}

.c-date {
  width: 144px;
}

.c-type {
  width: 120px;
}

.c-state,
.c-size {
  width: 80px;
}

th {
  height: 28px;
  color: #4c607a;
  text-align: left;
  vertical-align: top;
}

th div {
  position: relative;
  height: 25px;
  padding-left: 6px;
  line-height: 22px;
  border-right: 1px solid #e5e5e5;
}

th:first-child div {
  padding-left: 31px;
}

.sort {
  position: absolute;
  top: 0;
  left: 50%;
  width: 10px;
  height: 6px;
  margin-left: 7px;
}

td {
  height: 31px;
  padding-left: 6px;
  color: #6d6d6d;
  white-space: nowrap;
}

td.latin {
  padding-top: 2px;
}

td:first-child {
  padding-left: 19px;
  color: #000;
}

td:last-child {
  padding-right: 8px;
  text-align: right;
}

td .icon {
  display: inline-block;
  margin-right: 4px;
  vertical-align: -3px;
}

.state {
  width: 12px;
  height: 12px;
  margin-left: -1px;
}

/* status bar */
.statusbar {
  display: flex;
  flex: none;
  justify-content: space-between;
  align-items: center;
  height: 23px;
  padding-left: 14px;
  color: #33485f;
}

.statusbar span {
  padding-right: 10px;
  margin-bottom: 2px;
  border-right: 1px solid #ececec;
}

.statusbar__views {
  display: flex;
  align-self: stretch;
  padding-right: 4px;
}

.statusbar button {
  display: flex;
  justify-content: center;
  align-items: center;
  width: 22px;
}

.statusbar svg {
  width: 16px;
  height: 16px;
  background: #f3f3f3;
}

.statusbar .is-on {
  background: #cce8f6;
  border: 1px solid #26a0da;
}
```
